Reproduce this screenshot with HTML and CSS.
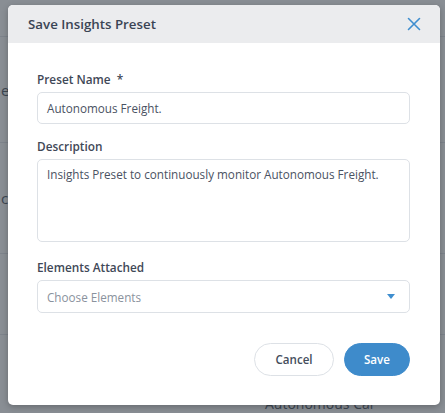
FILE: index.html
```html
<!DOCTYPE html>
<html>
<head>
<meta charset="utf-8">
<link rel="stylesheet" href="styles.css">
</head>
<body>
<div class="page">
  <div class="bg-row bg-top"></div>
  <div class="bg-row bg-e"><span>e</span></div>
  <div class="bg-row bg-c"><span>c</span></div>
  <div class="bg-row bg-x"></div>
  <div class="bg-foot"><span>Autonomous Car</span></div>
</div>
<div class="overlay"></div>
<div class="modal">
  <div class="modal-header">
    <h2 class="modal-title">Save Insights Preset</h2>
    <svg class="close" width="14" height="14" viewBox="0 0 14 14"><path d="M1.5 1.5 L12.5 12.5 M12.5 1.5 L1.5 12.5" stroke="#3f8ecf" stroke-width="1.6" fill="none" stroke-linecap="round"/></svg>
  </div>
  <div class="modal-body">
    <label class="label">Preset Name <span class="req">*</span></label>
    <div class="input">Autonomous Freight.</div>
    <label class="label l-desc">Description</label>
    <div class="input textarea">Insights Preset to continuously monitor Autonomous Freight.</div>
    <label class="label l-el">Elements Attached</label>
    <div class="input select">
      <span class="placeholder">Choose Elements</span>
      <svg class="caret" width="8" height="5" viewBox="0 0 8 5"><path d="M0 0 L8 0 L4 5 Z" fill="#3f8ecf"/></svg>
    </div>
    <div class="actions">
      <button class="btn btn-cancel">Cancel</button>
      <button class="btn btn-save">Save</button>
    </div>
  </div>
</div>
</body>
</html>
```
FILE: styles.css
```css
html, body {
  margin: 0;
  padding: 0;
}
body {
  width: 445px;
  height: 413px;
  overflow: hidden;
  background: #ffffff;
  font-family: "Open Sans", Lato, sans-serif;
  position: relative;
}
.page {
  display: flex;
  flex-direction: column;
  height: 413px;
}
.bg-row {
  border-bottom: 1px solid #e4e7ea;
  color: #56606c;
  font-size: 15px;
  display: flex;
  align-items: center;
  padding-left: 1px;
}
.bg-top { height: 36px; }
.bg-e { height: 105px; }
.bg-c { height: 110px; }
.bg-x { height: 80px; }
.bg-foot {
  flex: 1;
  display: flex;
  align-items: flex-end;
  padding-left: 265px;
  color: #56606c;
  font-size: 14px;
}
.overlay {
  position: absolute;
  inset: 0;
  background: rgba(40, 50, 60, 0.55);
}
.modal {
  position: absolute;
  left: 8px;
  top: 5px;
  width: 432px;
  height: 400px;
  background: #ffffff;
  border-radius: 5px;
  box-shadow: 0 2px 6px rgba(0, 0, 0, 0.25);
  overflow: hidden;
  display: flex;
  flex-direction: column;
}
.modal-header {
  height: 38px;
  background: #ebecee;
  display: flex;
  align-items: center;
  justify-content: space-between;
  padding: 0 19px 0 20px;
}
.modal-title {
  margin: 0;
  font-size: 13.3px;
  font-weight: 600;
  color: #3a4454;
}
.close {
  display: block;
}
.modal-body {
  padding: 27px 30px 0 29px;
  display: flex;
  flex-direction: column;
}
.label {
  font-size: 11.8px;
  font-weight: 600;
  color: #3f4857;
  line-height: 18px;
  margin-bottom: 4px;
}
.req { margin-left: 3px; }
.l-desc { margin-top: 13px; }
.l-el { margin-top: 16px; }
.input {
  box-sizing: border-box;
  height: 32px;
  border: 1px solid #dde1e6;
  border-radius: 5px;
  padding: 0 9px;
  font-size: 11.7px;
  color: #4a5262;
  display: flex;
  align-items: center;
}
.textarea {
  height: 83px;
  align-items: flex-start;
  padding-top: 5px;
  line-height: 18px;
}
.select {
  height: 33px;
  justify-content: space-between;
  padding-right: 14px;
}
.placeholder { color: #8a929d; }
.caret { display: block; }
.actions {
  display: flex;
  justify-content: flex-end;
  gap: 10px;
  margin-top: 30px;
}
.btn {
  height: 33px;
  border-radius: 17px;
  font-family: "Open Sans", Lato, sans-serif;
  font-size: 11.6px;
  font-weight: 600;
  cursor: pointer;
}
.btn-cancel {
  width: 80px;
  background: #ffffff;
  border: 1px solid #dde1e6;
  color: #444d5c;
}
.btn-save {
  width: 66px;
  background: #3e8bcb;
  border: 1px solid #3e8bcb;
  color: #ffffff;
}
```
